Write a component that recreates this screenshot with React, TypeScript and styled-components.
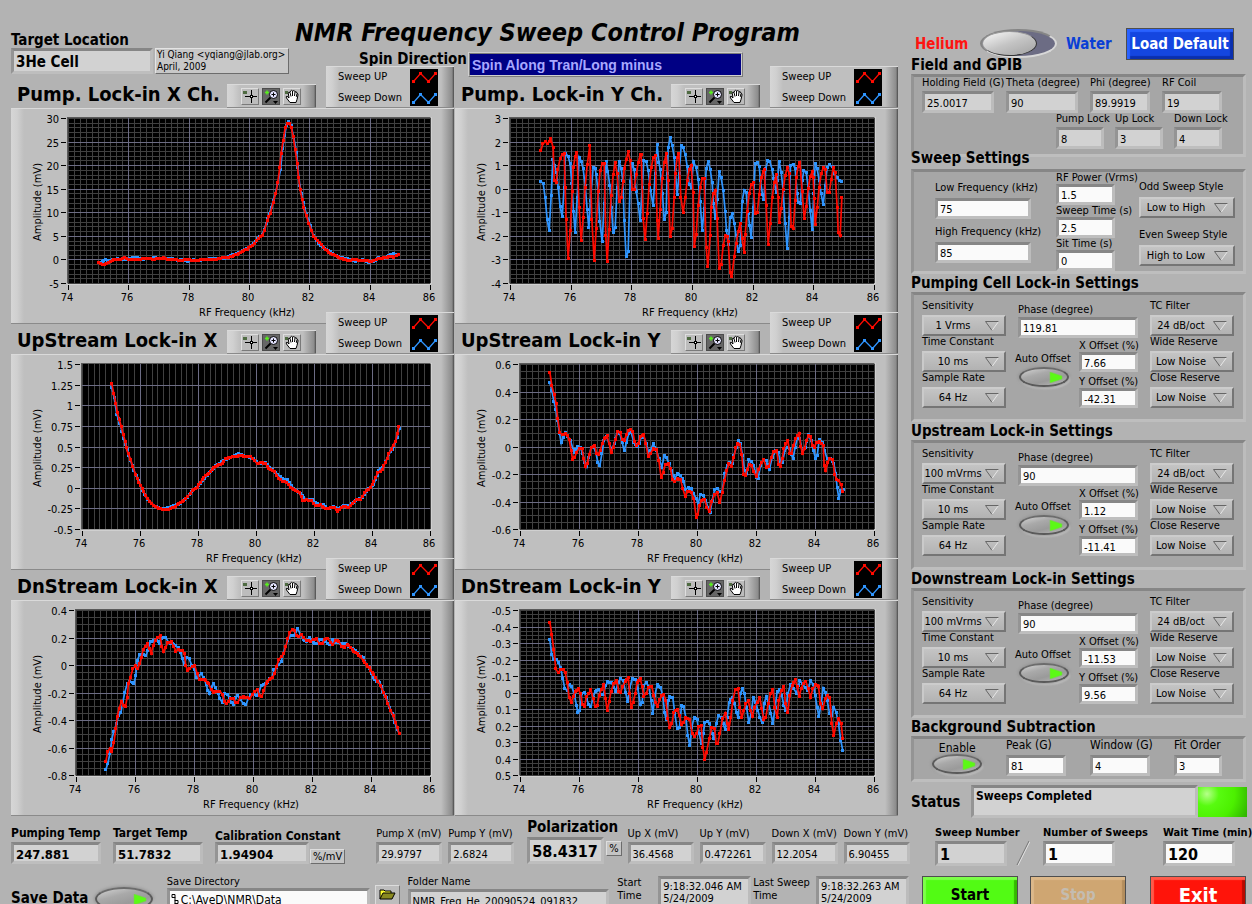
import React from 'react';
import styled, { createGlobalStyle, css } from 'styled-components';

const GlobalStyle = createGlobalStyle`
  *, *::before, *::after { box-sizing: border-box; }
  html, body { margin: 0; padding: 0; background: #b3b3b3; }
  body, input, select, button, output {
    font-family: "DejaVu Sans Condensed", "DejaVu Sans", sans-serif;
    color: #000;
  }
`;

/* ---------- page frame ---------- */

const Page = styled.div`
  display: grid;
  grid-template-columns: minmax(0, 1fr) 341px;
  height: 100vh;
  overflow: hidden;
  background: #b3b3b3;
  font-size: 11px;
  white-space: nowrap;
`;

const Main = styled.main`
  display: flex;
  flex-direction: column;
  padding-left: 11px;
  min-width: 0;
`;

const Side = styled.aside`
  display: flex;
  flex-direction: column;
  min-width: 0;
`;

/* ---------- shared bevels and controls ---------- */

const sunken = css`
  border: 3px solid;
  border-color: #868686 #bcbcbc #bebebe #949494;
`;

const raised = css`
  background: linear-gradient(
    90deg,
    #d6d6d6 0,
    #d0d0d0 6px,
    #bfbfbf 13px,
    #bfbfbf calc(100% - 13px),
    #8c8c8c calc(100% - 2px),
    #4a4a4a 100%
  );
  box-shadow: inset 0 1px #dadada, inset 0 -1px #8a8a8a;
`;

const FieldBox = styled.label<{ $w: number; $gap?: number }>`
  display: flex;
  flex-direction: column;
  align-items: flex-start;
  width: ${p => p.$w}px;
  gap: ${p => p.$gap ?? 2}px;
`;

const Caption = styled.span<{ $size?: number; $bold?: boolean }>`
  font-size: ${p => p.$size ?? 11}px;
  font-weight: ${p => (p.$bold ? 700 : 400)};
  line-height: 12px;
`;

const Entry = styled.input<{ $h: number; $size?: number; $bold?: boolean }>`
  ${sunken}
  width: 100%;
  height: ${p => p.$h}px;
  padding: 2px 2px 0;
  border-radius: 0;
  outline: 0;
  background: ${p => (p.readOnly ? '#d2d2d2' : '#fafafa')};
  font-size: ${p => p.$size ?? 11}px;
  font-weight: ${p => (p.$bold ? 700 : 400)};
`;

type FieldProps = {
  label: string;
  value: string;
  w: number;
  h?: number;
  gap?: number;
  size?: number;
  bold?: boolean;
  labelSize?: number;
  readOnly?: boolean;
};

function Field({ label, value, w, h = 22, gap, size, bold, labelSize, readOnly }: FieldProps) {
  return (
    <FieldBox $w={w} $gap={gap}>
      <Caption $size={labelSize} $bold={bold}>{label}</Caption>
      <Entry $h={h} $size={size} $bold={bold} defaultValue={value} readOnly={readOnly} />
    </FieldBox>
  );
}

const Ring = styled.span<{ $w: number }>`
  position: relative;
  display: block;
  width: ${p => p.$w}px;
`;

const Picker = styled.select`
  appearance: none;
  width: 100%;
  height: 21px;
  padding: 0 22px 1px 0;
  border: 2px solid;
  border-color: #cccccc #757575 #757575 #cacaca;
  border-radius: 0;
  background: linear-gradient(#c4c4c4, #b2b2b2);
  font-size: 11px;
  text-align: center;
  text-align-last: center;
`;

const Arrow = styled.svg`
  position: absolute;
  right: 7px;
  top: 6px;
  width: 14px;
  height: 10px;
  pointer-events: none;
`;

function Choice({ label, value, w, gap = 3 }: { label: string; value: string; w: number; gap?: number }) {
  return (
    <FieldBox $w={w} $gap={gap}>
      <Caption>{label}</Caption>
      <Ring $w={w}>
        <Picker defaultValue={value}>
          <option>{value}</option>
        </Picker>
        <Arrow viewBox="0 0 14 10">
          <path d="M7 9.5 L13.5 0.5" stroke="#e6e6e6" fill="none" />
          <path d="M13.5 0.5 H0.5 L7 9.5" stroke="#666" fill="none" />
        </Arrow>
      </Ring>
    </FieldBox>
  );
}

const Pill = styled.button<{ $w: number; $h: number }>`
  display: flex;
  align-items: center;
  justify-content: flex-end;
  flex: none;
  width: ${p => p.$w}px;
  height: ${p => p.$h}px;
  padding: 0 4px 0 0;
  border: 2px solid #5a5a5a;
  border-top-color: #6c6c6c;
  border-radius: 50%;
  background: linear-gradient(165deg, #d4d4d4 0, #a9a9a9 35%, #9a9a9a 65%, #b8b8b8 100%);
  box-shadow: 0 0 3px 1px #959595, 1px 2px 2px #d0d0d0;
`;

function PushPill({ w = 50, h = 20, name }: { w?: number; h?: number; name: string }) {
  return (
    <Pill type="button" $w={w} $h={h} aria-label={name} aria-pressed="true">
      <svg width="14" height="11" viewBox="0 0 14 11">
        <path d="M1 0 L13 4 V7 L1 11 Z" fill="#5cf916" stroke="#7ccf55" strokeWidth="0.6" />
      </svg>
    </Pill>
  );
}

/* ---------- header ---------- */

const Header = styled.header`
  display: flex;
  height: 78px;
`;

const TargetArea = styled.div`
  display: flex;
  align-items: flex-start;
  width: 284px;
  padding-top: 33px;
  gap: 2px;
`;

const Target = styled.label`
  display: flex;
  flex-direction: column;
  width: 142px;
  font-size: 15px;
  font-weight: 700;
  line-height: 15px;
`;

const Note = styled.div`
  margin-top: 15px;
  height: 26px;
  width: 134px;
  padding-left: 1px;
  border: 1px solid;
  border-color: #e4e4e4 #6c6c6c #6c6c6c #e4e4e4;
  background: #c8c8c8;
  font-size: 10px;
  line-height: 12px;
`;

const TitleArea = styled.div`
  flex: 1;
  padding-top: 16px;
`;

const Title = styled.h1`
  margin: 0;
  font-size: 25px;
  font-style: italic;
  font-weight: 700;
  line-height: 34px;
`;

const SpinRow = styled.label`
  display: flex;
  justify-content: flex-start;
  gap: 1px;
  padding-left: 64px;
  font-size: 15px;
  font-weight: 700;
  line-height: 18px;
`;

const SpinBox = styled.input`
  width: 275px;
  height: 25px;
  padding: 0 2px;
  margin-top: 2px;
  border: 2px ridge #cfcfcf;
  outline: 0;
  background: #000084;
  && {
    color: #a8a8ff;
    font-family: "Liberation Sans", Arial, sans-serif;
  }
  font-size: 14px;
  font-weight: 700;
`;

/* ---------- charts ---------- */

const Charts = styled.div`
  display: grid;
  grid-template-columns: 1fr 1fr;
  margin-right: 12px;
`;

const ChartCell = styled.section`
  padding-right: 1px;
`;

const ChartHead = styled.div`
  display: flex;
  align-items: flex-end;
  height: 30px;
`;

const ChartTitle = styled.h2`
  flex: 1;
  margin: 0;
  padding-left: 6px;
  font-size: 20px;
  font-weight: 700;
  line-height: 28px;
`;

const Palette = styled.div`
  ${raised}
  display: flex;
  gap: 3px;
  width: 89px;
  height: 24px;
  padding: 4px 0 0 14px;
  margin-right: 10px;
`;

const Tool = styled.button<{ $on?: boolean }>`
  display: flex;
  align-items: center;
  justify-content: center;
  width: 18px;
  height: 17px;
  padding: 0;
  border: 1px solid;
  border-color: ${p => (p.$on ? '#4c4c4c' : '#dedede #7a7a7a #7a7a7a #dedede')};
  background: ${p => (p.$on ? '#666' : '#bcbcbc')};
`;

const Legend = styled.div`
  ${raised}
  display: flex;
  justify-content: space-between;
  flex: none;
  position: relative;
  width: 128px;
  height: 42px;
  padding: 3px 16px 0 12px;
`;

const LegendNames = styled.div`
  font-size: 11px;
  line-height: 21px;
  margin-top: -3px;
`;

const ChartPanel = styled.div`
  ${raised}
`;

const ChartSvg = styled.svg`
  display: block;
  width: 100%;
  font-family: "DejaVu Sans Condensed", "DejaVu Sans", sans-serif;
  font-size: 11px;
`;

const RED = '#ff0a00';
const BLUE = '#2f95ff';

type Point = [number, number];

/* Traces are digitised in thirds of a panel unit, with the plot origin given by dx, dy. */
function toPoints(src: string, dx: number, dy: number): Point[] {
  return src.trim().split(/\s+/).map(p => {
    const [x, y] = p.split(',').map(Number);
    return [x / 3 + dx, y / 3 + dy] as Point;
  });
}

function markers(points: Point[]): Point[] {
  const out: Point[] = [];
  points.forEach((p, i) => {
    out.push(p);
    const next = points[i + 1];
    if (!next) return;
    const n = Math.round((next[0] - p[0]) / 2);
    for (let k = 1; k < n; k++) {
      out.push([p[0] + ((next[0] - p[0]) * k) / n, p[1] + ((next[1] - p[1]) * k) / n]);
    }
  });
  return out;
}

function Trace({ points, color }: { points: Point[]; color: string }) {
  return (
    <g>
      <polyline
        points={points.map(([x, y]) => `${x + 0.5},${y + 0.5}`).join(' ')}
        fill="none"
        stroke={color}
        strokeWidth="1.7"
      />
      <path
        d={markers(points).map(([x, y]) => `M${Math.round(x) - 1} ${Math.round(y) - 1}h3v3h-3z`).join('')}
        fill={color}
        shapeRendering="crispEdges"
      />
    </g>
  );
}

type ChartData = {
  title: string;
  left: number;
  ticks: string[];
  minor: number;
  dx: number;
  dy: number;
  up: string;
  down: string;
};

const RIGHT = 419;
const TOP = 10;
const BOTTOM = 175;

function Plot({ data }: { data: ChartData }) {
  const { left, ticks, minor } = data;
  const w = RIGHT - left;
  const h = BOTTOM - TOP;
  const rows = ticks.length - 1;
  const minorX = Array.from({ length: 61 }, (_, i) => Math.round(left + (w * i) / 60));
  const minorY = Array.from({ length: rows * minor + 1 }, (_, i) => Math.round(TOP + (h * i) / (rows * minor)));
  return (
    <ChartSvg viewBox="0 0 443 216" role="img" aria-label={data.title}>
      <rect x={left - 1} y={TOP - 1} width={w + 2} height={h + 2} fill="#5a5a5a" />
      <path d={`M${RIGHT + 1} ${TOP - 1}V${BOTTOM + 1}H${left - 1}`} stroke="#e2e2e2" fill="none" />
      <rect x={left} y={TOP} width={w} height={h} fill="#000" />
      <g shapeRendering="crispEdges">
        <path
          d={
            minorX.map(x => `M${x} ${TOP}h1V${BOTTOM}h-1z`).join('') +
            (minor > 1 ? minorY.map(y => `M${left} ${y}H${RIGHT}v1H${left}z`).join('') : '')
          }
          fill="#404040"
        />
        <path
          d={
            minorX.filter((_, i) => i % 10 === 0 && i > 0 && i < 60).map(x => `M${x} ${TOP}h1V${BOTTOM}h-1z`).join('') +
            minorY.filter((_, i) => i % minor === 0 && i > 0 && i < rows * minor).map(y => `M${left} ${y}H${RIGHT}v1H${left}z`).join('')
          }
          fill="#6c6c84"
        />
        <path
          d={
            minorX.filter((_, i) => i % 10 === 0).map(x => `M${x} 177h1v5h-1z`).join('') +
            minorY.filter((_, i) => i % minor === 0).map(y => `M${left - 7} ${y}h5v1h-5z`).join('')
          }
        />
      </g>
      {ticks.map((t, i) => (
        <text key={t} x={left - 9} y={Math.round(TOP + (h * i) / rows) + 5} textAnchor="end">{t}</text>
      ))}
      {[74, 76, 78, 80, 82, 84, 86].map((t, i) => (
        <text key={t} x={Math.round(left + (w * i) / 6) - 1} y={193} textAnchor="middle">{t}</text>
      ))}
      <text x={(left + RIGHT) / 2 - 2} y={208} textAnchor="middle">RF Frequency (kHz)</text>
      <text transform="translate(30 94) rotate(-90)" textAnchor="middle">Amplitude (mV)</text>
      <Trace points={toPoints(data.down, data.dx, data.dy)} color={BLUE} />
      <Trace points={toPoints(data.up, data.dx, data.dy)} color={RED} />
    </ChartSvg>
  );
}

function LegendSwatch() {
  const line: Point[] = [[3, 12], [10, 4], [18, 12], [25, 4]];
  const low = line.map(([x, y]) => [x, y + 21] as Point);
  const draw = (pts: Point[], c: string) => (
    <g fill={c} shapeRendering="crispEdges">
      {pts.map(([x, y]) => <rect key={x} x={x - 1} y={y - 1} width="3" height="3" />)}
    </g>
  );
  return (
    <svg width="28" height="37" viewBox="0 0 28 37">
      <rect width="28" height="37" fill="#000" />
      <polyline points={line.map(([x, y]) => `${x + 0.5},${y + 0.5}`).join(' ')} stroke={RED} strokeWidth="1.2" fill="none" />
      <polyline points={low.map(([x, y]) => `${x + 0.5},${y + 0.5}`).join(' ')} stroke={BLUE} strokeWidth="1.2" fill="none" />
      {draw(line, RED)}
      {draw(low, BLUE)}
    </svg>
  );
}

function Tools() {
  return (
    <Palette>
      <Tool type="button" aria-label="Cursor">
        <svg width="16" height="15" viewBox="0 0 16 15" shapeRendering="crispEdges">
          <rect x="1" y="2" width="4" height="3" fill="#4f6b42" />
          <path d="M9 1h1v13h-1zM3 7h12v1h-12z" />
          <rect x="8" y="6" width="3" height="3" />
          <rect x="9" y="7" width="1" height="1" fill="#fff" />
        </svg>
      </Tool>
      <Tool type="button" $on aria-label="Zoom">
        <svg width="16" height="15" viewBox="0 0 16 15">
          <path d="M2 3.5h4M4 1.5v4" stroke="#57f01c" strokeWidth="1.5" />
          <path d="M7.500 8.500 L2.500 13.500" stroke="#000" strokeWidth="2" />
          <circle cx="10.500" cy="5.500" r="4" fill="#e4e4ff" stroke="#000" />
          <path d="M10.500 3.500v4M8.500 5.500h4" stroke="#000" />
          <path d="M10 12h5l-2.500 3z" />
        </svg>
      </Tool>
      <Tool type="button" aria-label="Pan">
        <svg width="16" height="15" viewBox="0 0 16 15">
          <rect x="1" y="2" width="3" height="3" fill="#4f6b42" />
          <path
            d="M6 13.500 L2.500 9 Q1.500 7.500 3 7.200 L5 9 L4.300 4.200 Q4.500 2.500 6 3.500 L6.500 2 Q7.500 0.700 8.500 2 L9.200 1.700 Q10.600 1.200 11 2.800 Q12.800 2.300 13 4.200 Q14.200 4.600 14 6 L13 10.500 L12 13.500 Z"
            fill="#fff"
            stroke="#000"
          />
          <path d="M6 3.500 L7 7.500 M8.500 2 V7 M11 2.800 L10.500 7 M13 4.500 L12.300 7.800" stroke="#000" fill="none" />
        </svg>
      </Tool>
    </Palette>
  );
}

function Chart({ data }: { data: ChartData }) {
  return (
    <ChartCell>
      <ChartHead>
        <ChartTitle>{data.title}</ChartTitle>
        <Tools />
        <Legend>
          <LegendNames>
            <div>Sweep UP</div>
            <div>Sweep Down</div>
          </LegendNames>
          <LegendSwatch />
        </Legend>
      </ChartHead>
      <ChartPanel>
        <Plot data={data} />
      </ChartPanel>
    </ChartCell>
  );
}

const CHARTS: ChartData[] = [
  {
    title: 'Pump. Lock-in X Ch.',
    left: 57,
    ticks: ['30', '25', '20', '15', '10', '5', '0', '-5'],
    minor: 5,
    dx: -11,
    dy: -108,
    up: `295,785 305,791 313,791 325,785 340,778 360,777 373,771 385,777 420,776 440,773 455,776 480,774 490,772 500,777 520,777
      540,780 560,777 580,781 600,778 630,778 655,775 670,771 695,768 710,761 725,753 740,746 755,735 775,714 785,704 792,690
      800,660 810,638 818,605 826,578 832,545 838,500 842,458 848,420 854,382 861,368 866,368 872,380 878,408 884,448 890,488
      894,530 899,568 905,598 910,622 917,645 925,668 933,690 940,708 950,720 962,731 975,748 990,758 1005,766 1020,773 1035,778
      1045,781 1060,776 1080,781 1095,779 1112,783 1120,780 1140,773 1155,772 1170,768 1180,770 1193,761`,
    down: `295,787 305,782 315,778 330,780 350,775 365,777 385,775 395,771 410,772 430,776 450,773 465,772 485,775 500,775 515,774
      530,780 545,776 560,782 580,778 600,780 610,776 640,775 665,775 690,765 720,755 745,740 765,722 785,702 797,670 812,622
      824,580 832,548 840,508 846,445 852,405 858,375 865,364 872,376 880,412 888,455 892,500 898,555 908,605 918,642 930,675
      938,705 960,735 985,750 1000,763 1020,770 1040,775 1065,783 1085,777 1105,785 1120,782 1135,772 1150,775 1165,765 1180,760 1193,762`,
  },
  {
    title: 'Pump. Lock-in Y Ch.',
    left: 55,
    ticks: ['3', '2', '1', '0', '-1', '-2', '-3', '-4'],
    minor: 5,
    dx: -5,
    dy: -108,
    up: `271,451 277,430 284,424 290,428 296,424 301,415 308,442 311,540 317,547 322,506 329,474 335,461 341,458 344,560 347,658
      353,775 359,690 365,574 368,502 374,468 379,455 386,622 392,721 398,652 404,560 410,493 418,436 424,656 431,781 437,685
      443,574 449,510 455,490 461,488 466,706 470,784 476,688 482,586 488,522 494,487 500,520 506,604 512,590 518,544 521,505
      527,478 533,454 539,481 545,566 551,566 557,523 563,487 569,463 572,463 578,655 584,718 590,640 596,553 602,502 608,472
      614,466 620,660 623,715 629,626 635,535 641,487 647,460 653,540 659,709 665,683 671,590 674,518 680,472 685,458 691,590
      698,637 704,592 710,541 716,508 722,495 728,577 731,737 737,703 743,616 749,560 755,535 761,535 767,740 772,799 779,706
      782,620 788,579 794,569 800,655 806,805 812,793 818,736 824,706 830,707 833,722 839,817 844,827 851,769 857,728 863,694
      869,668 875,713 881,757 884,703 890,632 896,580 902,553 908,547 914,640 920,637 926,583 932,532 938,514 941,508 947,616
      953,731 959,670 965,592 971,547 977,523 983,590 986,667 992,625 998,567 1004,526 1010,502 1016,518 1022,679 1028,685
      1034,601 1037,532 1043,497 1048,487 1055,572 1061,655 1067,619 1073,565 1079,529 1085,514 1088,530 1091,595 1094,673
      1100,622 1106,560 1112,520 1118,502 1124,507 1130,576 1136,577 1142,538 1148,502 1154,517 1160,620 1163,697 1169,706 1174,592`,
    down: `271,544 278,548 284,592 290,658 296,691 302,586 307,478 313,495 318,515 323,560 329,619 335,649 341,562 345,458 353,468
      359,490 364,550 369,634 374,697 380,592 386,470 392,482 398,505 404,555 410,628 415,682 420,600 428,500 434,504 437,522
      443,575 448,664 455,724 461,610 467,482 472,512 478,556 483,622 488,697 494,682 500,560 506,482 512,504 517,540 521,661
      527,769 533,754 539,542 545,490 551,506 557,572 563,610 569,661 575,560 580,480 587,482 593,510 600,570 608,616 614,520
      620,433 625,485 629,506 636,580 641,658 647,637 650,520 653,442 659,412 665,434 671,470 674,508 680,583 686,520 692,436
      698,442 704,461 710,497 716,552 722,560 729,484 737,502 743,536 749,604 755,691 761,625 767,505 773,482 779,506 785,547
      789,610 794,655 800,598 806,514 812,532 818,569 824,632 828,690 833,733 839,652 845,640 851,668 857,706 863,754 869,735
      875,602 881,569 887,577 893,640 902,712 908,620 914,490 920,487 926,497 930,540 936,583 940,598 946,503 952,481 958,484
      965,507 970,535 977,577 981,540 986,482 992,515 998,570 1004,670 1010,745 1016,650 1020,494 1028,491 1034,505 1040,580
      1043,607 1049,610 1055,540 1060,510 1067,516 1073,560 1079,629 1085,688 1090,580 1094,490 1100,505 1106,540 1112,580
      1118,613 1124,555 1130,500 1137,493 1145,499 1152,520 1160,532 1168,541 1174,544`,
  },
  {
    title: 'UpStream Lock-in X',
    left: 71,
    ticks: ['1.5', '1.25', '1', '0.75', '0.5', '0.25', '0', '-0.25', '-0.5'],
    minor: 1,
    dx: -11,
    dy: -44,
    up: `334,220 340,250 346,278 350,305 356,326 362,347 368,372 374,392 377,412 383,430 390,446 397,468 405,491 415,515 425,533
      435,555 448,572 460,586 475,593 490,598 505,596 520,590 535,580 550,569 562,558 575,540 590,530 600,515 610,500 625,489
      640,470 655,463 665,458 675,445 690,440 705,438 720,434 735,439 750,438 762,450 770,460 780,456 795,459 805,475 822,483
      835,504 845,512 858,515 870,530 885,540 897,547 907,571 918,567 932,570 945,585 960,583 975,595 990,592 1002,592 1012,603
      1022,590 1035,587 1045,592 1057,578 1068,566 1080,566 1093,547 1110,530 1120,512 1132,487 1145,477 1155,455 1165,430
      1178,404 1185,392 1190,370 1195,347`,
    down: `334,232 341,262 349,312 358,338 370,385 385,434 400,480 420,525 440,566 460,584 480,595 500,592 520,586 540,578 560,560
      580,536 600,520 620,494 645,466 670,450 690,441 715,430 735,437 760,445 775,460 795,455 815,478 832,492 845,505 860,508
      880,535 900,550 915,566 935,568 950,580 968,582 980,595 1000,588 1015,596 1030,585 1045,585 1065,570 1085,560 1105,535
      1120,522 1135,480 1150,465 1165,432 1180,408 1190,380 1196,355`,
  },
  {
    title: 'UpStream Lock-in Y',
    left: 65,
    ticks: ['0.6', '0.4', '0.2', '0', '-0.2', '-0.4', '-0.6'],
    minor: 4,
    dx: -5,
    dy: -44,
    up: `298,185 304,225 311,253 317,280 322,325 328,367 335,373 344,370 350,376 356,387 362,420 366,446 372,442 378,425 386,414
      395,415 400,445 405,469 410,460 416,433 422,412 433,405 438,428 443,432 449,420 455,400 461,384 470,376 476,400 482,425
      488,410 494,388 502,364 509,365 515,388 521,389 528,373 534,359 541,358 547,364 552,392 558,405 564,400 570,378 580,373
      586,400 593,437 600,430 608,414 618,418 625,450 632,502 638,485 644,462 653,460 660,475 666,508 672,514 680,505 690,506
      697,535 704,557 712,543 722,545 730,565 737,620 742,613 747,585 753,570 762,566 769,590 776,603 784,572 792,553 800,547
      808,577 815,545 822,510 829,480 835,460 842,468 850,440 856,412 862,398 868,402 874,432 879,492 884,496 890,478 896,462
      903,466 910,484 917,498 924,478 932,457 940,448 948,472 955,468 962,440 970,424 979,420 984,462 989,468 995,445 1000,414
      1006,400 1012,391 1018,428 1023,428 1029,405 1035,385 1041,374 1046,368 1051,408 1056,428 1062,415 1068,390 1074,376
      1080,378 1086,405 1091,410 1098,396 1108,394 1118,404 1121,465 1126,480 1132,455 1138,443 1146,446 1153,492 1159,508
      1165,511 1172,523 1177,544`,
    down: `298,217 304,240 310,272 316,296 321,330 327,368 332,397 338,382 344,365 352,378 360,390 368,418 373,425 382,407 390,412
      397,430 403,455 409,469 415,440 422,410 430,410 437,430 442,456 448,466 454,430 460,390 468,378 476,400 484,416 491,400
      500,365 508,370 515,395 521,421 528,395 535,368 542,366 550,395 560,409 566,400 572,380 580,380 588,400 594,425 600,420
      608,400 618,420 626,445 634,470 641,436 648,442 656,460 663,480 672,510 680,488 690,495 699,513 706,538 713,530 722,535
      730,550 737,565 743,580 750,551 758,555 766,570 772,590 779,605 785,570 792,538 800,535 808,542 815,545 822,490 830,465
      838,455 845,460 850,435 857,412 863,391 870,400 876,435 882,480 889,490 895,448 903,452 910,465 918,500 923,503 930,465
      938,450 947,450 957,476 965,440 975,420 983,425 990,455 996,455 1003,420 1010,410 1017,415 1022,432 1028,443 1034,410
      1041,380 1048,385 1056,425 1064,410 1074,373 1082,390 1089,420 1095,443 1100,436 1106,388 1115,395 1122,420 1130,445
      1140,443 1150,460 1156,490 1160,532 1165,563 1171,541 1178,537`,
  },
  {
    title: 'DnStream Lock-in X',
    left: 65,
    ticks: ['0.4', '0.2', '0', '-0.2', '-0.4', '-0.6', '-0.8'],
    minor: 4,
    dx: -11,
    dy: -40,
    up: `316,604 322,572 329,563 334,573 340,547 346,505 350,468 356,445 363,422 370,435 375,438 380,410 384,368 390,350 397,325
      404,316 412,325 418,308 423,290 428,268 434,258 440,250 447,265 452,278 458,255 464,240 471,231 479,226 484,258 489,274
      495,262 502,246 512,244 520,258 526,272 534,268 545,270 552,280 556,316 562,330 568,325 575,317 583,315 590,340 597,358
      606,357 616,359 625,370 632,388 638,396 648,392 658,392 666,402 672,424 677,430 684,422 690,414 699,415 706,427 712,425
      720,411 730,409 740,410 748,415 755,402 762,393 770,388 778,405 784,408 790,390 797,368 806,356 815,352 822,340 828,318
      835,298 842,288 850,280 856,258 862,234 868,215 875,208 882,210 888,225 895,228 902,222 910,232 918,240 930,242 938,236
      948,235 956,250 965,248 973,236 982,233 990,245 997,252 1005,240 1015,242 1023,258 1032,260 1040,252 1050,260 1060,272
      1070,280 1080,288 1088,300 1097,312 1106,322 1115,335 1124,350 1132,362 1140,375 1148,395 1155,408 1162,430 1170,450
      1178,465 1185,485 1190,500 1196,520`,
    down: `316,628 322,608 328,580 334,536 340,512 348,490 354,465 361,457 367,425 373,395 380,370 388,362 395,365 400,370 406,345
      410,300 418,282 428,282 436,286 442,270 450,243 460,240 468,240 477,248 482,235 488,230 496,232 504,245 515,250 525,255
      533,262 540,275 545,295 551,312 558,290 566,295 574,315 582,328 588,352 595,345 602,340 610,352 617,372 622,390 627,400
      632,380 638,370 646,382 653,400 658,415 665,425 672,398 680,402 686,410 692,425 698,433 705,410 712,406 720,418 728,428
      736,433 743,415 750,403 760,402 768,405 775,398 782,375 790,372 800,365 808,355 815,350 820,328 828,320 835,312 842,304
      848,280 855,258 862,240 870,226 880,226 886,212 892,205 900,222 908,236 917,243 928,232 938,245 948,250 958,238 965,238
      975,242 987,253 996,238 1005,246 1015,245 1025,250 1035,248 1045,258 1055,265 1065,270 1075,282 1088,292 1098,312
      1108,325 1118,350 1128,362 1138,365 1147,392 1157,412 1167,440 1175,460 1183,485 1190,508 1196,518`,
  },
  {
    title: 'DnStream Lock-in Y',
    left: 65,
    ticks: ['-0.5', '-0.4', '-0.3', '-0.2', '-0.1', '0', '0.1', '0.2', '0.3', '0.4', '0.5'],
    minor: 4,
    dx: -5,
    dy: -40,
    up: `298,185 304,223 310,268 316,325 323,337 330,328 338,327 344,335 350,365 356,410 362,425 368,408 374,392 383,385 390,400
      396,433 402,437 408,408 414,400 421,388 428,415 434,438 440,435 446,405 452,388 460,373 465,415 470,450 476,422 482,392
      489,370 499,360 505,392 510,396 517,378 524,362 533,352 538,400 542,440 548,425 554,400 560,365 569,354 575,378 580,407
      587,400 594,380 604,378 610,405 615,425 620,438 628,418 634,405 640,402 646,420 652,475 658,502 664,490 670,455 680,447
      687,465 693,493 700,485 706,470 718,477 725,518 731,528 738,520 745,498 752,495 757,560 763,598 768,575 776,535 784,502
      792,503 797,548 802,548 808,520 816,475 824,458 830,488 835,508 841,470 847,420 854,388 863,385 868,440 874,472 880,450
      886,430 893,420 900,450 906,467 912,440 920,425 928,412 934,445 940,478 946,470 953,430 960,400 967,388 973,440 980,472
      985,420 992,390 1000,378 1005,430 1012,455 1018,405 1025,375 1034,358 1040,378 1046,408 1052,385 1058,368 1066,362
      1073,385 1080,410 1087,385 1095,373 1104,378 1110,430 1117,445 1124,415 1130,405 1138,412 1144,490 1150,525 1157,490
      1165,475 1172,490 1177,535`,
    down: `298,238 304,283 310,298 317,296 323,305 330,320 337,355 343,385 350,390 357,373 364,378 372,405 378,435 382,457 388,450
      394,400 402,395 408,415 415,432 421,438 428,410 434,392 444,388 452,402 459,402 465,375 472,364 482,365 490,380 496,392
      503,365 510,355 518,360 525,395 532,424 538,380 546,353 556,358 562,385 570,433 575,425 580,375 587,366 595,378 602,420
      607,460 613,405 620,373 630,382 637,405 642,455 647,478 653,420 658,407 667,412 673,460 680,505 687,500 693,436 699,438
      706,470 712,525 718,556 724,500 731,470 740,478 746,520 753,550 758,520 763,487 770,483 778,490 785,520 790,533 797,490
      804,466 812,470 818,490 824,508 830,470 836,425 845,410 852,430 858,455 863,472 869,400 875,385 882,400 888,440 895,486
      902,460 908,412 916,425 922,450 928,470 935,487 941,430 947,408 954,425 961,458 967,490 974,440 980,392 987,388 994,405
      1000,435 1006,450 1012,400 1020,373 1030,385 1038,398 1044,375 1048,360 1056,370 1064,382 1072,390 1080,360 1088,372
      1094,405 1100,440 1105,468 1112,430 1118,383 1124,395 1130,420 1137,458 1144,465 1150,440 1157,455 1164,490 1171,540 1177,571`,
  },
];

/* ---------- readouts below the charts ---------- */

const Readouts = styled.div`
  display: flex;
  align-items: flex-end;
  height: 48px;
  gap: 6px;
`;

const Group = styled.div<{ $gap: number; $after: number }>`
  display: flex;
  align-items: flex-end;
  gap: ${p => p.$gap}px;
  margin-right: ${p => p.$after}px;
`;

const Unit = styled.span<{ $raise?: boolean }>`
  padding: 0 2px;
  border: 1px solid;
  border-color: #dedede #6c6c6c #6c6c6c #dedede;
  background: #c4c4c4;
  font-size: 11px;
  line-height: 13px;
  margin-bottom: ${p => (p.$raise ? 8 : 0)}px;
`;

const SaveRow = styled.div`
  display: flex;
  align-items: flex-start;
  padding-top: 12px;
`;

const SaveLabel = styled.span`
  width: 84px;
  padding-top: 12px;
  font-size: 15px;
  font-weight: 700;
  line-height: 20px;
`;

const SavePill = styled.div`
  width: 72px;
  padding-top: 11px;
`;

const PathBox = styled.div`
  ${sunken}
  display: flex;
  align-items: center;
  gap: 2px;
  width: 100%;
  height: 24px;
  padding: 0 1px;
  background: #fafafa;
`;

const PathInput = styled.input`
  flex: 1;
  min-width: 0;
  padding: 0;
  border: 0;
  outline: 0;
  background: transparent;
  font-size: 12px;
`;

const Browse = styled.button`
  width: 25px;
  height: 20px;
  margin: 9px 8px 0 5px;
  padding: 0;
  border: 1px solid;
  border-color: #dcdcdc #7a7a7a #7a7a7a #dcdcdc;
  background: #bdbdbd;
`;

const TimeBox = styled.label<{ $w: number }>`
  display: flex;
  width: ${p => p.$w}px;
  justify-content: space-between;
  font-size: 11px;
  line-height: 13px;
  white-space: pre-line;
  margin-right: 2px;
`;

const Stamp = styled.output`
  ${sunken}
  width: 93px;
  height: 34px;
  padding: 2px 2px 0;
  background: #d2d2d2;
  line-height: 12px;
`;

/* ---------- right column ---------- */

const ModeRow = styled.div`
  display: flex;
  align-items: center;
  height: 56px;
  padding: 31px 0 0 4px;
`;

const Mode = styled.span<{ $color: string; $w: number }>`
  width: ${p => p.$w}px;
  color: ${p => p.$color};
  font-size: 15px;
  font-weight: 700;
`;

const Rocker = styled.button`
  width: 77px;
  height: 29px;
  padding: 0;
  margin-right: 9px;
  border: 2px solid;
  border-color: #858585 #d8d8d8 #d8d8d8 #858585;
  border-radius: 50%;
  background: #6c6c84;
`;

const Knob = styled.span`
  display: block;
  width: 55px;
  height: 25px;
  border: 1px solid #333;
  border-top-color: #999;
  border-left-color: #999;
  border-radius: 50%;
  background: linear-gradient(160deg, #efefef 10%, #c4c4c4 50%, #a2a2a2);
`;

const BigButton = styled.button<{ $c: string; $lo: string; $hi: string; $w: number; $h: number; $text: string; $size: number }>`
  flex: none;
  width: ${p => p.$w}px;
  height: ${p => p.$h}px;
  padding: 0;
  border: 1px solid #4e4e4e;
  background: ${p => p.$c};
  box-shadow: inset 3px 3px 1px ${p => p.$hi}, inset -3px -3px 1px ${p => p.$lo};
  && { color: ${p => p.$text}; }
  font-size: ${p => p.$size}px;
  font-weight: 700;
`;

const SectionTitle = styled.h3<{ $overlap?: boolean }>`
  margin: ${p => (p.$overlap ? '-8px 0 2px' : '0')};
  font-size: 15px;
  font-weight: 700;
  line-height: 18px;
`;

const Box = styled.section<{ $h: number }>`
  ${sunken}
  display: flex;
  width: 335px;
  height: ${p => p.$h}px;
  padding-left: 8px;
  background: #a6a6a6;
`;

const Stack = styled.div<{ $w: number; $top?: number; $gap?: number; $left?: number }>`
  display: flex;
  flex-direction: column;
  width: ${p => p.$w}px;
  padding: ${p => p.$top ?? 0}px 0 0 ${p => p.$left ?? 0}px;
  gap: ${p => p.$gap ?? 0}px;
`;

const Line = styled.div<{ $gap: number; $left?: number }>`
  display: flex;
  gap: ${p => p.$gap}px;
  padding-left: ${p => p.$left ?? 0}px;
`;

const AutoOffset = styled.div`
  display: flex;
  flex-direction: column;
  gap: 2px;
  width: 61px;
  padding-top: 13px;
  margin-left: -3px;
`;

const PillSlot = styled.div`
  padding-left: 4px;
`;

type Lockin = { title: string; sens: string; phase: string; x: string; y: string };

const LOCKINS: Lockin[] = [
  { title: 'Pumping Cell Lock-in Settings', sens: '1 Vrms', phase: '119.81', x: '7.66', y: '-42.31' },
  { title: 'Upstream Lock-in Settings', sens: '100 mVrms', phase: '90', x: '1.12', y: '-11.41' },
  { title: 'Downstream Lock-in Settings', sens: '100 mVrms', phase: '90', x: '-11.53', y: '9.56' },
];

function LockinSection({ data }: { data: Lockin }) {
  return (
    <>
      <SectionTitle>{data.title}</SectionTitle>
      <Box $h={130}>
        <Stack $w={96} $top={5}>
          <Choice label="Sensitivity" value={data.sens} w={84} />
          <Choice label="Time Constant" value="10 ms" w={84} />
          <Choice label="Sample Rate" value="64 Hz" w={84} />
        </Stack>
        <Stack $w={132} $top={9} $gap={2}>
          <Field label="Phase (degree)" value={data.phase} w={120} h={21} gap={1} />
          <Line $gap={3}>
            <AutoOffset>
              <Caption>Auto Offset</Caption>
              <PillSlot><PushPill name="Auto Offset" /></PillSlot>
            </AutoOffset>
            <Stack $w={59} $gap={4}>
              <Field label="X Offset (%)" value={data.x} w={59} h={20} gap={0} />
              <Field label="Y Offset (%)" value={data.y} w={59} h={20} gap={0} />
            </Stack>
          </Line>
        </Stack>
        <Stack $w={84} $top={5}>
          <Choice label="TC Filter" value="24 dB/oct" w={84} />
          <Choice label="Wide Reserve" value="Low Noise" w={84} />
          <Choice label="Close Reserve" value="Low Noise" w={84} />
        </Stack>
      </Box>
    </>
  );
}

const StatusRow = styled.div`
  display: flex;
  align-items: center;
  margin-top: 3px;
  height: 33px;
`;

const StatusLabel = styled.span`
  width: 60px;
  font-size: 15px;
  font-weight: 700;
`;

const StatusBox = styled.output`
  ${sunken}
  width: 227px;
  height: 33px;
  padding: 1px 2px;
  background: #d2d2d2;
  font-size: 12px;
  font-weight: 700;
  line-height: 15px;
`;

const Led = styled.span`
  width: 49px;
  height: 30px;
  background: radial-gradient(circle at 9px 7px, #b6ff8a 0, #58fb10 12px, #4cf000 60%, #2eb000 100%);
`;

const RunRow = styled.div`
  display: flex;
  align-items: flex-end;
  height: 48px;
  padding-left: 24px;
`;

const ButtonRow = styled.div`
  display: flex;
  gap: 12px;
  padding: 10px 0 0 11px;
`;

const Gap = styled.span<{ $w: number }>`
  flex: none;
  width: ${p => p.$w}px;
`;

export default function App() {
  return (
    <Page>
      <GlobalStyle />
      <Main>
        <Header>
          <TargetArea>
            <Target>
              Target Location
              <Entry $h={26} $size={15} $bold readOnly defaultValue="3He Cell" />
            </Target>
            <Note>
              Yi Qiang &lt;yqiang@jlab.org&gt;
              <br />
              April, 2009
            </Note>
          </TargetArea>
          <TitleArea>
            <Title>NMR Frequency Sweep Control Program</Title>
            <SpinRow>
              Spin Direction
              <SpinBox readOnly defaultValue="Spin Along Tran/Long minus" />
            </SpinRow>
          </TitleArea>
        </Header>

        <Charts>
          {CHARTS.map(c => <Chart key={c.title} data={c} />)}
        </Charts>

        <Readouts>
          <Group $gap={12} $after={6}>
            <Field label="Pumping Temp" value="247.881" w={90} size={13} labelSize={12} gap={3} bold readOnly />
            <Field label="Target Temp" value="51.7832" w={90} size={13} labelSize={12} gap={3} bold readOnly />
          </Group>
          <Group $gap={1} $after={25}>
            <Field label="Calibration Constant" value="1.94904" w={94} size={13} labelSize={12} gap={0} bold readOnly />
            <Unit>%/mV</Unit>
          </Group>
          <Field label="Pump X (mV)" value="29.9797" w={66} readOnly />
          <Field label="Pump Y (mV)" value="2.6824" w={66} readOnly />
          <Group $gap={2} $after={0}>
            <Gap $w={5} />
            <Field label="Polarization" value="58.4317" w={77} h={27} size={16} labelSize={15} gap={4} bold readOnly />
            <Unit $raise>%</Unit>
          </Group>
          <Field label="Up X (mV)" value="36.4568" w={66} readOnly />
          <Field label="Up Y (mV)" value="0.472261" w={66} readOnly />
          <Field label="Down X (mV)" value="12.2054" w={66} readOnly />
          <Field label="Down Y (mV)" value="6.90455" w={66} readOnly />
        </Readouts>

        <SaveRow>
          <SaveLabel>Save Data</SaveLabel>
          <SavePill><PushPill w={58} h={24} name="Save Data" /></SavePill>
          <FieldBox $w={203} $gap={0}>
            <Caption>Save Directory</Caption>
            <PathBox>
              <svg width="8" height="14" viewBox="0 0 8 14">
                <path d="M1 1.500h3v3h-3zM4 4v4M4 7.500h3v3h-3zM4 10v3h2" stroke="#000" fill="none" />
              </svg>
              <PathInput defaultValue="C:\AveD\NMR\Data" />
            </PathBox>
          </FieldBox>
          <Browse type="button" aria-label="Browse">
            <svg width="17" height="12" viewBox="0 0 17 12">
              <path d="M1 11V2h4l1 1h6v2" fill="#ffff30" stroke="#000" />
              <path d="M1 11L4 5h12l-3 6z" fill="#8a8a20" stroke="#000" />
            </svg>
          </Browse>
          <Field label="Folder Name" value="NMR_Freq_He_20090524_091832" w={202} h={22} gap={1} readOnly />
          <Gap $w={8} />
          <TimeBox $w={134}>
            {'Start\nTime'}
            <Stamp>{'9:18:32.046 AM\n5/24/2009'}</Stamp>
          </TimeBox>
          <TimeBox $w={156}>
            {'Last Sweep\nTime'}
            <Stamp>{'9:18:32.263 AM\n5/24/2009'}</Stamp>
          </TimeBox>
        </SaveRow>
      </Main>

      <Side>
        <ModeRow>
          <Mode $color="#ff1410" $w={65}>Helium</Mode>
          <Rocker type="button" aria-label="Helium or water"><Knob /></Rocker>
          <Mode $color="#0a3fd6" $w={60}>Water</Mode>
          <BigButton type="button" $c="#1446e0" $hi="#2a62ff" $lo="#0a2fae" $w={108} $h={32} $text="#fff" $size={15}>
            Load Default
          </BigButton>
        </ModeRow>

        <SectionTitle>Field and GPIB</SectionTitle>
        <Box $h={83}>
          <Stack $w={310}>
            <Line $gap={12}>
              <Field label="Holding Field (G)" value="25.0017" w={72} readOnly />
              <Field label="Theta (degree)" value="90" w={72} readOnly />
              <Field label="Phi (degree)" value="89.9919" w={60} readOnly />
              <Field label="RF Coil" value="19" w={60} readOnly />
            </Line>
            <Line $gap={11} $left={134}>
              <Field label="Pump Lock" value="8" w={48} readOnly />
              <Field label="Up Lock" value="3" w={48} readOnly />
              <Field label="Down Lock" value="4" w={48} readOnly />
            </Line>
          </Stack>
        </Box>

        <SectionTitle $overlap>Sweep Settings</SectionTitle>
        <Box $h={105}>
          <Stack $w={134} $left={13} $top={10} $gap={7}>
            <Field label="Low Frequency (kHz)" value="75" w={96} h={21} gap={4} />
            <Field label="High Frequency (kHz)" value="85" w={96} h={21} gap={4} />
          </Stack>
          <Stack $w={83}>
            <Field label="RF Power (Vrms)" value="1.5" w={59} h={21} gap={0} />
            <Field label="Sweep Time (s)" value="2.5" w={59} h={21} gap={0} />
            <Field label="Sit Time (s)" value="0" w={59} h={21} gap={0} />
          </Stack>
          <Stack $w={96} $top={9} $gap={11}>
            <Choice label="Odd Sweep Style" value="Low to High" w={96} gap={4} />
            <Choice label="Even Sweep Style" value="High to Low" w={96} gap={4} />
          </Stack>
        </Box>

        {LOCKINS.map(l => <LockinSection key={l.title} data={l} />)}

        <SectionTitle>Background Subtraction</SectionTitle>
        <Box $h={46}>
          <Stack $w={84} $left={10} $top={3}>
            <Caption $size={12}>&nbsp;&nbsp;Enable</Caption>
            <PushPill name="Enable" />
          </Stack>
          <Line $gap={24}>
            <Field label="Peak (G)" value="81" w={60} h={21} gap={4} labelSize={12} />
            <Field label="Window (G)" value="4" w={60} h={21} gap={4} labelSize={12} />
            <Field label="Fit Order" value="3" w={48} h={21} gap={4} labelSize={12} />
          </Line>
        </Box>

        <StatusRow>
          <StatusLabel>Status</StatusLabel>
          <StatusBox>Sweeps Completed</StatusBox>
          <Led />
        </StatusRow>

        <RunRow>
          <Field label="Sweep Number" value="1" w={72} h={25} size={16} labelSize={11} bold readOnly />
          <Gap $w={9} />
          <svg width="14" height="26" viewBox="0 0 14 26">
            <path d="M1 25 L13 1" stroke="#777" />
            <path d="M2 25.500 L14 1.500" stroke="#ddd" />
          </svg>
          <Gap $w={13} />
          <Field label="Number of Sweeps" value="1" w={72} h={25} size={16} labelSize={11} bold />
          <Gap $w={48} />
          <Field label="Wait Time (min)" value="120" w={72} h={25} size={16} labelSize={11} bold />
        </RunRow>

        <ButtonRow>
          <BigButton type="button" $c="#52fb14" $hi="#7dff4a" $lo="#34b800" $w={96} $h={38} $text="#000" $size={15}>
            Start
          </BigButton>
          <BigButton type="button" disabled $c="#cfa672" $hi="#dcb88a" $lo="#b38d5c" $w={96} $h={38} $text="#c4bcb0" $size={15}>
            Stop
          </BigButton>
          <Gap $w={0} />
          <BigButton type="button" $c="#ff140a" $hi="#ff5a4a" $lo="#b80a00" $w={96} $h={38} $text="#fff" $size={20}>
            Exit
          </BigButton>
        </ButtonRow>
      </Side>
    </Page>
  );
}
